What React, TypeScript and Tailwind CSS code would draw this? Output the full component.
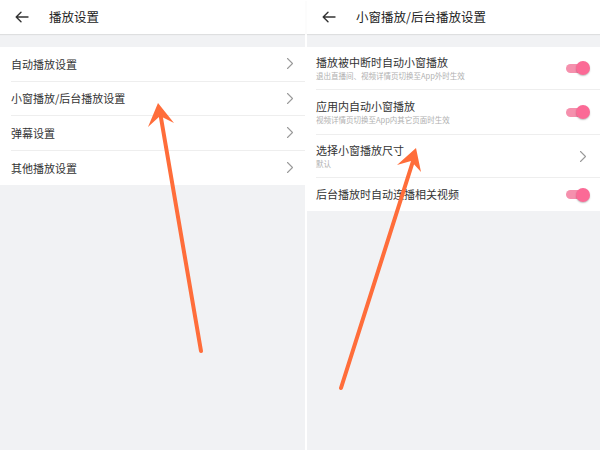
const font = { fontFamily: '"Noto Sans CJK SC", "Noto Sans", sans-serif' };

function BackArrow() {
  return (
    <svg width="14" height="12" viewBox="0 0 14 12" fill="none" stroke="#333" strokeWidth="1.4" strokeLinecap="round" strokeLinejoin="round">
      <path d="M13 6H1.5M6 1.2 1.2 6 6 10.8" />
    </svg>
  );
}

function Chevron() {
  return (
    <svg width="8" height="13" viewBox="0 0 8 13" fill="none" stroke="#9a9a9a" strokeWidth="1.1" strokeLinecap="round" strokeLinejoin="round">
      <path d="M1.5 1.5 6.5 6.5 1.5 11.5" />
    </svg>
  );
}

function Toggle() {
  return (
    <div className="relative h-[16px] w-[24px]">
      <div className="absolute left-0 top-[3.5px] h-[9px] w-[20px] rounded-full bg-[#f590ad]" />
      <div className="absolute right-0 top-[1px] h-[14px] w-[14px] rounded-full bg-[#fb6a96] shadow-[0_1px_1.5px_rgba(0,0,0,0.25)]" />
    </div>
  );
}

function Header({ title }: { title: string }) {
  return (
    <div className="flex h-[34px] items-center bg-white pl-[15px] shadow-[0_1px_1px_rgba(0,0,0,0.08)]">
      <BackArrow />
      <span className="ml-[20px] text-[12.5px] text-[#222]">{title}</span>
    </div>
  );
}

const leftRows = ["自动播放设置", "小窗播放/后台播放设置", "弹幕设置", "其他播放设置"];

export default function App() {
  return (
    <div className="relative flex h-[450px] w-[600px] overflow-hidden bg-white" style={font}>
      <div className="flex w-[305px] flex-col bg-[#f1f2f4]">
        <Header title="播放设置" />
        <div className="mt-[13px] bg-white pl-[11px]">
          {leftRows.map((r, i) => (
            <div
              key={r}
              className={`flex h-[34.5px] items-center justify-between pr-[11px] ${i < leftRows.length - 1 ? "border-b border-[#eeeeee]" : ""}`}
            >
              <span className="text-[11px] text-[#333]">{r}</span>
              <Chevron />
            </div>
          ))}
        </div>
      </div>

      <div className="ml-[2px] flex flex-1 flex-col bg-[#f1f2f4]">
        <Header title="小窗播放/后台播放设置" />
        <div className="mt-[13px] bg-white pl-[9px]">
          <div className="flex h-[43px] items-center justify-between border-b border-[#eeeeee] pr-[10px]">
            <div className="flex flex-col leading-none">
              <span className="text-[11px] text-[#333]">播放被中断时自动小窗播放</span>
              <span className="mt-[4px] text-[7.5px] text-[#b0b0b0]">退出直播间、视频详情页切换至App外时生效</span>
            </div>
            <Toggle />
          </div>
          <div className="flex h-[45px] items-center justify-between border-b border-[#eeeeee] pr-[10px]">
            <div className="flex flex-col leading-none">
              <span className="text-[11px] text-[#333]">应用内自动小窗播放</span>
              <span className="mt-[4px] text-[7.5px] text-[#b0b0b0]">视频详情页切换至App内其它页面时生效</span>
            </div>
            <Toggle />
          </div>
          <div className="flex h-[43px] items-center justify-between border-b border-[#eeeeee] pr-[10px]">
            <div className="flex flex-col leading-none">
              <span className="text-[11px] text-[#333]">选择小窗播放尺寸</span>
              <span className="mt-[4px] text-[7.5px] text-[#b0b0b0]">默认</span>
            </div>
            <div className="mr-[3px]">
              <Chevron />
            </div>
          </div>
          <div className="flex h-[33px] items-center justify-between pr-[10px]">
            <span className="text-[11px] text-[#333]">后台播放时自动连播相关视频</span>
            <Toggle />
          </div>
        </div>
      </div>

      <svg className="pointer-events-none absolute inset-0" width="600" height="450" viewBox="0 0 600 450">
        <g stroke="#ff6d3a" strokeWidth="4" strokeLinecap="round" fill="none">
          <path d="M201 351 L160 112" />
          <path d="M341 388 L414 158" />
        </g>
        <g fill="#ff6d3a">
          <path d="M158 103 L148 127 L160 116 L174 123 Z" />
          <path d="M416 148 L397 165 L411 161 L421 172 Z" />
        </g>
      </svg>
    </div>
  );
}
